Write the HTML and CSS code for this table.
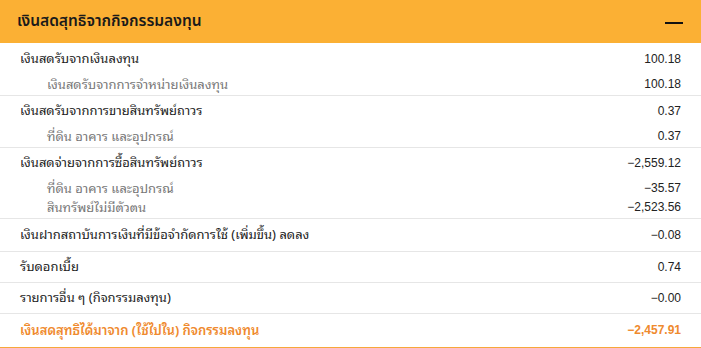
FILE: index.html
```html
<!DOCTYPE html>
<html lang="th">
<head>
<meta charset="utf-8">
<link rel="stylesheet" href="styles.css">
</head>
<body>
<section class="panel">
  <header class="panel-head">
    <h2 class="panel-title">เงินสดสุทธิจากกิจกรรมลงทุน</h2>
    <span class="collapse" aria-label="ย่อ"></span>
  </header>
  <div class="group">
    <div class="line main"><span class="label">เงินสดรับจากเงินลงทุน</span><span class="num">100.18</span></div>
    <div class="subs">
      <div class="line sub"><span class="label">เงินสดรับจากการจำหน่ายเงินลงทุน</span><span class="num">100.18</span></div>
    </div>
  </div>
  <div class="group">
    <div class="line main"><span class="label">เงินสดรับจากการขายสินทรัพย์ถาวร</span><span class="num">0.37</span></div>
    <div class="subs">
      <div class="line sub"><span class="label">ที่ดิน อาคาร และอุปกรณ์</span><span class="num">0.37</span></div>
    </div>
  </div>
  <div class="group">
    <div class="line main"><span class="label">เงินสดจ่ายจากการซื้อสินทรัพย์ถาวร</span><span class="num">−2,559.12</span></div>
    <div class="subs">
      <div class="line sub"><span class="label">ที่ดิน อาคาร และอุปกรณ์</span><span class="num">−35.57</span></div>
      <div class="line sub"><span class="label">สินทรัพย์ไม่มีตัวตน</span><span class="num">−2,523.56</span></div>
    </div>
  </div>
  <div class="row tall"><span class="label">เงินฝากสถาบันการเงินที่มีข้อจำกัดการใช้ (เพิ่มขึ้น) ลดลง</span><span class="num">−0.08</span></div>
  <div class="row"><span class="label">รับดอกเบี้ย</span><span class="num">0.74</span></div>
  <div class="row"><span class="label">รายการอื่น ๆ (กิจกรรมลงทุน)</span><span class="num">−0.00</span></div>
  <div class="row total"><span class="label">เงินสดสุทธิได้มาจาก (ใช้ไปใน) กิจกรรมลงทุน</span><span class="num">−2,457.91</span></div>
</section>
</body>
</html>
```

FILE: styles.css
```css
html, body {
  margin: 0;
  padding: 0;
  background: #ffffff;
}
body {
  font-family: "Noto Sans Thai Looped", "Tahoma", "Loma", "Noto Sans Thai", "Liberation Sans", sans-serif;
  color: #222222;
  font-size: 13px;
}
.panel {
  width: 701px;
  border-bottom: 3px solid #f6a83a;
}
.panel-head {
  height: 43px;
  background: #fbb034;
  display: flex;
  align-items: center;
  justify-content: space-between;
  padding: 0 18px 0 17px;
  box-sizing: border-box;
}
.panel-title {
  margin: 0;
  font-family: "Noto Sans Thai", "Liberation Sans", sans-serif;
  font-size: 15.5px;
  font-weight: 600;
  color: #1a1a1a;
}
.collapse {
  width: 18px;
  height: 2px;
  background: #111111;
  margin-top: 2px;
}
.group {
  padding: 5px 20px 1px 20px;
  border-bottom: 1px solid #e6e6e6;
}
.group:first-of-type {
  padding-top: 6px;
}
.line {
  display: flex;
  justify-content: space-between;
  align-items: center;
}
.main {
  height: 20px;
}
.subs {
  margin-top: 6px;
}
.sub {
  height: 19px;
  padding-left: 27px;
}
.sub .label {
  color: #777777;
}
.label {
  margin-bottom: 3px;
}
.row {
  display: flex;
  justify-content: space-between;
  align-items: center;
  height: 30px;
  padding: 0 20px;
  border-bottom: 1px solid #e6e6e6;
}
.row.tall {
  height: 32px;
}
.row.total {
  height: 33px;
  border-bottom: none;
  color: #ef8a2e;
  font-weight: 600;
}
.num {
  font-family: "Liberation Sans", Arial, sans-serif;
  font-size: 12px;
  font-weight: 400;
  margin-bottom: 1px;
}
.total .num {
  font-weight: 700;
}
```
